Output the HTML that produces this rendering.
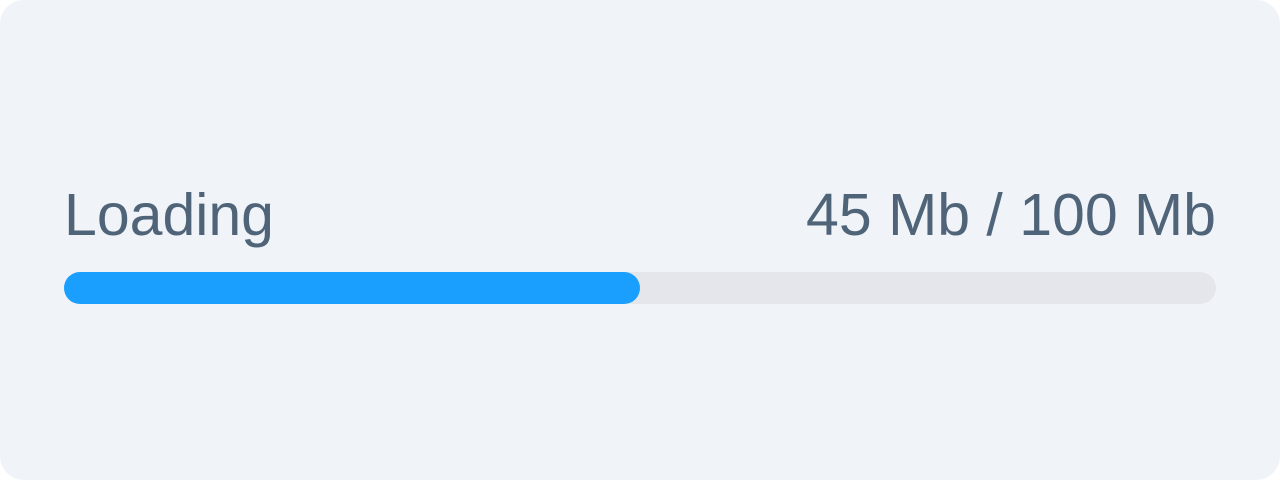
<!DOCTYPE html>
<html><head><style>
html,body{margin:0;padding:0;background:#fff;}
.card{position:absolute;left:0;top:0;width:1280px;height:480px;background:#f0f3f8;border-radius:24px;}
.t{position:absolute;top:180px;font-family:"Liberation Sans",sans-serif;font-size:59px;color:#4f6478;line-height:70px;white-space:nowrap;}
.track{position:absolute;left:64px;top:272px;width:1152px;height:32px;border-radius:16px;background:#e4e6eb;}
.fill{position:absolute;left:0;top:0;width:576px;height:32px;border-radius:16px;background:#1a9fff;}
</style></head><body>
<div class="card">
<div class="t" style="left:64px">Loading</div>
<div class="t" style="right:64px">45 Mb / 100 Mb</div>
<div class="track"><div class="fill"></div></div>
</div>
</body></html>
